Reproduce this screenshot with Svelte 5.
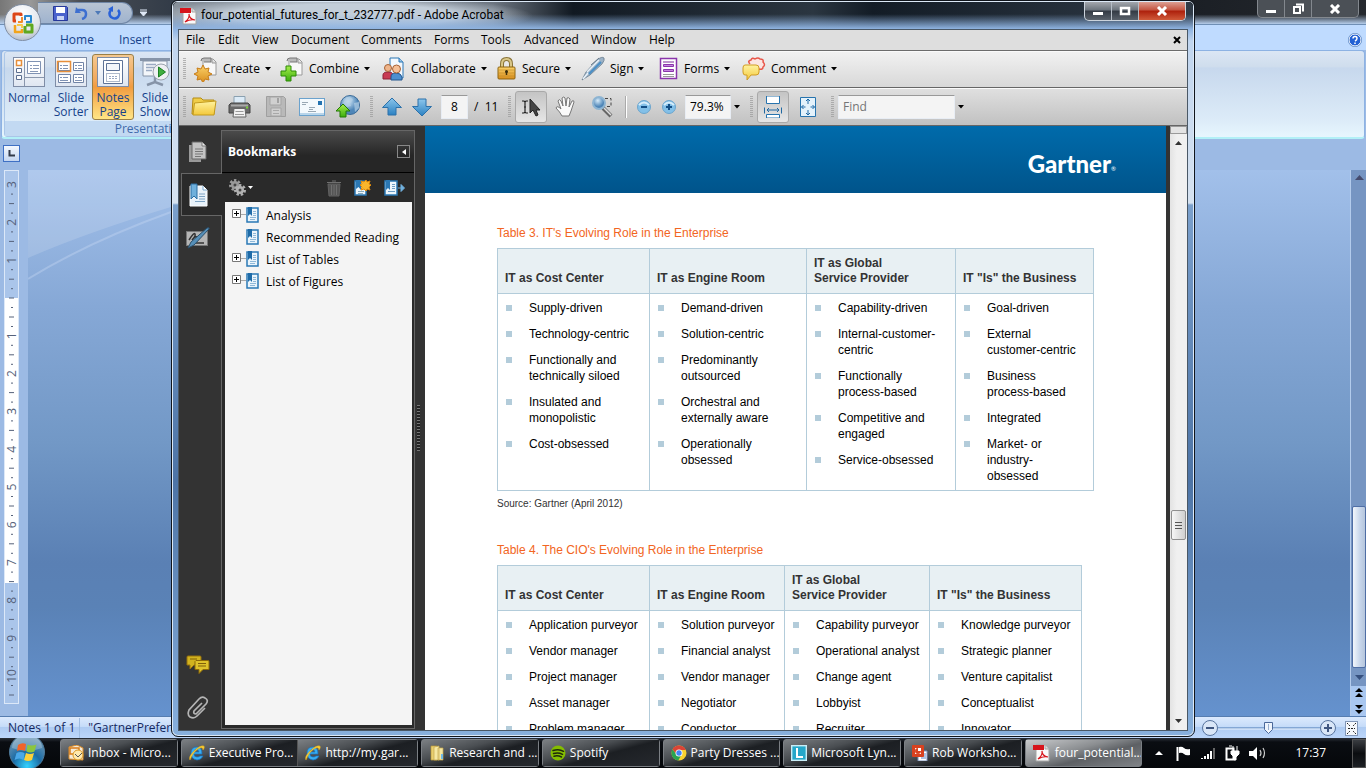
<script>
  const menus = [
    ['File', 32], ['Edit', 34], ['View', 39], ['Document', 70], ['Comments', 73],
    ['Forms', 47], ['Tools', 43], ['Advanced', 67], ['Window', 58], ['Help', 40]
  ];
  const tasks = ['Create', 'Combine', 'Collaborate', 'Secure', 'Sign', 'Forms', 'Comment'];
  const bookmarks = [
    ['Analysis', true], ['Recommended Reading', false], ['List of Tables', true], ['List of Figures', true]
  ];
  const heads = ['IT as Cost Center', 'IT as Engine Room', 'IT as Global\nService Provider', 'IT "Is" the Business'];
  const tables = [
    {
      id: 'roles-it',
      title: "Table 3. IT's Evolving Role in the Enterprise",
      cols: [
        ['Supply-driven', 'Technology-centric', 'Functionally and\ntechnically siloed', 'Insulated and\nmonopolistic', 'Cost-obsessed'],
        ['Demand-driven', 'Solution-centric', 'Predominantly\noutsourced', 'Orchestral and\nexternally aware', 'Operationally\nobsessed'],
        ['Capability-driven', 'Internal-customer-\ncentric', 'Functionally\nprocess-based', 'Competitive and\nengaged', 'Service-obsessed'],
        ['Goal-driven', 'External\ncustomer-centric', 'Business\nprocess-based', 'Integrated', 'Market- or\nindustry-\nobsessed']
      ],
      source: 'Source: Gartner (April 2012)'
    },
    {
      id: 'roles-cio',
      title: "Table 4. The CIO's Evolving Role in the Enterprise",
      cols: [
        ['Application purveyor', 'Vendor manager', 'Project manager', 'Asset manager', 'Problem manager'],
        ['Solution purveyor', 'Financial analyst', 'Vendor manager', 'Negotiator', 'Conductor'],
        ['Capability purveyor', 'Operational analyst', 'Change agent', 'Lobbyist', 'Recruiter'],
        ['Knowledge purveyor', 'Strategic planner', 'Venture capitalist', 'Conceptualist', 'Innovator']
      ],
      source: ''
    }
  ];
  const views = [
    ['normal', 'Normal'], ['sorter', 'Slide\nSorter'], ['notes', 'Notes\nPage'], ['show', 'Slide\nShow']
  ];
  const taskbar = [
    [['outlook', 'Inbox - Micro...']],
    [['ie', 'Executive Pro...'], ['ie', 'http://my.gar...']],
    [['explorer', 'Research and ...']],
    [['spotify', 'Spotify']],
    [['chrome', 'Party Dresses ...']],
    [['lync', 'Microsoft Lyn...']],
    [['ppt', 'Rob Worksho...']],
    [['pdf', 'four_potential...']]
  ];
  const unit = 37.8;
  const rulerMarks = Array.from({ length: 14 }, (_, i) => ({ n: Math.abs(i - 3), y: 128 + (i - 3) * unit }));
  let page = $state('8');
  let zoom = $state('79.3%');
  let find = $state('');
</script>

{#snippet icon(name)}
  {#if name === 'Create'}
    <svg width="24" height="26" viewBox="0 0 24 26"><use href="#sheet" /><path d="M9 9l2 4 4-1-1 4 4 2-4 2 1 4-4-1-2 4-2-4-4 1 1-4-4-2 4-2-1-4 4 1z" fill="url(#gold)" stroke="#c77c18" /></svg>
  {:else if name === 'Combine'}
    <svg width="24" height="26" viewBox="0 0 24 26"><use href="#sheet" /><path d="M6 10h5v5h5v5h-5v5H6v-5H1v-5h5z" fill="url(#green)" stroke="#2c8a07" /></svg>
  {:else if name === 'Collaborate'}
    <svg width="24" height="26" viewBox="0 0 24 26"><path d="M8 2h9l4 4v16H8z" fill="#f3f8fd" stroke="#2b77b5" /><path d="M17 2v4h4" fill="#9cc5e6" stroke="#2b77b5" /><path d="M1 23v-4q0-3 5-3t5 3v4z" fill="#c83b53" stroke="#8c2034" /><circle cx="6" cy="12" r="3.500" fill="#efb58b" stroke="#a86235" /><path d="M9 24v-3q0-4 5-4t6 4v3z" fill="#4d8fd0" stroke="#24568d" /><circle cx="14.500" cy="13" r="4" fill="#f5bf96" stroke="#a86235" /></svg>
  {:else if name === 'Secure'}
    <svg width="20" height="26" viewBox="0 0 20 26"><path d="M5 13V8q0-5 4.500-5T14 8v5" fill="none" stroke="#8a7438" stroke-width="4" /><path d="M5 13V8q0-5 4.500-5T14 8v5" fill="none" stroke="#d9c788" stroke-width="2" /><rect x="1" y="11" width="17" height="12" rx="1" fill="url(#gold)" stroke="#8d6410" /><path d="M2 14h15M2 17h15M2 20h15" stroke="#bd8b28" opacity=".6" /><circle cx="9.500" cy="15.500" r="1.500" fill="#3b2c0b" /><path d="M9.500 15v4" stroke="#3b2c0b" stroke-width="1.500" /></svg>
  {:else if name === 'Sign'}
    <svg width="24" height="26" viewBox="0 0 24 26"><path d="M1 24l4-8L16 4q5-4 7-2 1 2-2 6L9 19z" fill="#9db3c7" stroke="#6a7c8d" stroke-width=".8" /><path d="M6 16L18 4M2 23l5-6" stroke="#e9f2fa" stroke-width="1.500" /><path d="M8 18L20 6" stroke="#4a8fc6" stroke-width="2" /><path d="M10 9L18 2" stroke="#667a8c" fill="none" /></svg>
  {:else if name === 'Forms'}
    <svg width="20" height="26" viewBox="0 0 20 26"><path d="M1.500 2.500h16v20h-16z" fill="#fff" stroke="#8a35ab" stroke-width="1.500" /><path d="M4 6h11" stroke="#7c2b9b" /><path d="M4.500 8.500h10v2h-10zM4.500 13.500h10v2h-10z" fill="#c583df" stroke="#8a35ab" /><path d="M4 18.500h11M4 20.500h11" stroke="#999" /></svg>
  {:else if name === 'Comment'}
    <svg width="24" height="26" viewBox="0 0 24 26"><path d="M8 8q-3-3 1-4 1-3 4-1 3-2 5 0 4 0 3 3 3 3 0 5 0 3-4 2l-2 3v-3" fill="#fbe5e2" stroke="#e8564a" stroke-width="1.500" /><path d="M3 9h11q3 0 3 3v4q0 3-3 3H9l-4 5v-5H3q-2 0-2-3v-4q0-3 2-3z" fill="url(#yellow)" stroke="#d19c22" /></svg>
  {:else if name === 'folder'}
    <svg width="28" height="24" viewBox="0 0 28 24"><path d="M2 19L3 3h8l2 2h11v14z" fill="#f0cd48" stroke="#b58c12" /><path d="M3 20L4.500 8 26 6l-2 14z" fill="url(#yellow)" stroke="#c39a1c" /></svg>
  {:else if name === 'print'}
    <svg width="24" height="24" viewBox="0 0 24 24"><path d="M6 1.500h11v8H6z" fill="#dcebf7" stroke="#8aa0b0" /><path d="M3 8h17l2 2v8H1v-8z" fill="#6a6a6a" stroke="#444" /><path d="M3 10.500h17" stroke="#a9a9a9" stroke-width="2" /><path d="M6 13.500h11l1 8.500H5z" fill="#f2f2f2" stroke="#666" /><path d="M7.500 16.500h8M7 19.500h9" stroke="#999" /><path d="M18 12.500h2" stroke="#7ad03a" stroke-width="2" /></svg>
  {:else if name === 'save'}
    <svg width="22" height="24" viewBox="0 0 22 24"><path d="M1.500 1.500h17l2 2v18h-19z" fill="#b9b9b9" stroke="#9f9f9f" /><path d="M5 2h11v8H5zM6 13h10v8H6z" fill="#d0d0d0" stroke="#a5a5a5" /><path d="M13 3v5" stroke="#a2a2a2" stroke-width="2" /><path d="M8 15.500h6M8 18.500h6" stroke="#a8a8a8" /></svg>
  {:else if name === 'mail'}
    <svg width="26" height="20" viewBox="0 0 26 20"><rect x=".5" y="1.500" width="25" height="17" fill="#f4f9fd" stroke="#6ba2cd" /><path d="M1 17h24" stroke="#b9d5ea" stroke-width="2" /><path d="M19 4h4v4h-4z" fill="#2372b0" /><path d="M3 5.500h6M3 7.500h4M10 10.500h6M10 12.500h4M9 14.500h8" stroke="#9aa8b4" /></svg>
  {:else if name === 'globe'}
    <svg width="26" height="24" viewBox="0 0 26 24"><circle cx="15" cy="10" r="9.500" fill="url(#ball)" stroke="#3b6c99" /><path d="M12 2q5 0 6 3l-3 3 1 3-4 1-4-4zM19 8l5-1v6l-4 4z" fill="#b5d0e6" opacity=".7" /><path d="M8 9l7 7h-4v6H5v-6H1z" fill="url(#green)" stroke="#237b05" /></svg>
  {:else if name === 'up'}
    <svg width="22" height="22" viewBox="0 0 22 22"><path d="M11 2l9.500 9.500H15V19H7v-7.500H1.500z" fill="url(#blue)" stroke="#2c71aa" /></svg>
  {:else if name === 'down'}
    <svg width="22" height="22" viewBox="0 0 22 22"><path d="M11 20L1.500 10.500H7V3h8v7.500h5.500z" fill="url(#blue)" stroke="#2c71aa" /></svg>
  {:else if name === 'select'}
    <svg width="20" height="20" viewBox="0 0 20 20"><path d="M1 4h2l1 1 1-1h2M4 5v10M1 16h2l1-1 1 1h2M3 10h2" fill="none" stroke="#222" stroke-width="1.200" /><path d="M9 2v14l3-3 3 6 2-1-2-5h4z" fill="#444" stroke="#222" /></svg>
  {:else if name === 'hand'}
    <svg width="22" height="22" viewBox="0 0 22 22"><path d="M7 20q-2-4-6-8 1-3 5 1L3 5q1-3 3 0l2 5-1-8q2-2 3 0l1 8 1-8q2-1 3 1l-1 8 3-6q2-1 2 1l-3 9-2 5z" fill="#fafafa" stroke="#777" /></svg>
  {:else if name === 'loupe'}
    <svg width="24" height="24" viewBox="0 0 24 24"><path d="M9 3.500h11v8h-8" fill="none" stroke="#444" stroke-dasharray="3 2" /><path d="M12 13l8 8" stroke="#666" stroke-width="4" /><path d="M13 13l7 7" stroke="#ddd" stroke-width="1.500" /><circle cx="8" cy="8" r="6" fill="url(#ball)" stroke="#8db4d2" stroke-width="2" /></svg>
  {:else if name === 'minus' || name === 'plus'}
    <svg width="16" height="16" viewBox="0 0 16 16"><circle cx="8" cy="8" r="6.500" fill="#83c0e8" stroke="#6ba5cd" /><path d="M3 6q5-5 10 0" stroke="#d5ecfa" stroke-width="2" fill="none" /><path d={name === 'minus' ? 'M5 8h6' : 'M5 8h6M8 5v6'} stroke="#134f86" stroke-width="2" /></svg>
  {:else if name === 'fitwidth'}
    <svg width="18" height="22" viewBox="0 0 18 22"><path d="M2.500 0v7.500h13V0z" fill="#fff" stroke="#2874ae" /><path d="M2.500 22v-3.500h13V22z" fill="#fff" stroke="#2874ae" /><path d="M.5 11.500v6M17.500 11.500v6M3 14h12M5 12l-2 2 2 2M13 12l2 2-2 2" stroke="#2169a2" fill="none" /></svg>
  {:else if name === 'fitpage'}
    <svg width="18" height="22" viewBox="0 0 18 22"><path d="M1.500 1.500h15v19h-15z" fill="#e4f2fb" stroke="#2874ae" /><path d="M9 3v5M7 5l2-2 2 2M9 19v-5M7 17l2 2 2-2M2.500 11h4M4.500 9l-2 2 2 2M15.500 11h-4M13.500 9l2 2-2 2" fill="none" stroke="#1e69a6" /></svg>
  {:else if name === 'pages'}
    <svg width="20" height="22" viewBox="0 0 20 22"><path d="M1 4h12v17H1z" fill="#9a9a9a" /><path d="M4 1h10l4 4v13H4z" fill="#c4c4c4" stroke="#666" /><path d="M14 1v4h4" fill="#eee" stroke="#777" /><path d="M7 8h8M7 10.500h8M7 13h8M7 15.500h6" stroke="#777" /></svg>
  {:else if name === 'marks'}
    <svg width="20" height="24" viewBox="0 0 20 24"><path d="M1 3h13l4 4v16H1z" fill="#e9f2fa" stroke="#fff" /><path d="M14 3v4h4" fill="#fff" stroke="#7aa9cf" /><path d="M10 11h6M10 13.500h6M10 16h6M6 18.500h10" stroke="#7ea4c4" /><path d="M2 1h6v15l-3-3-3 3z" fill="#6fb0dc" stroke="#2c6fa3" /></svg>
  {:else if name === 'signature'}
    <svg width="24" height="22" viewBox="0 0 24 22"><rect x=".5" y="4.500" width="21" height="14" fill="#b5b5b5" stroke="#777" /><path d="M3 13q5-8 6-6t-3 6q3-4 5-3t3 1M5 16h13" fill="none" stroke="#333" stroke-width="1.500" /><path d="M2 21l3-6L21 1q3-1 2 1L8 18z" fill="#568fb8" stroke="#2b4f6b" /></svg>
  {:else if name === 'chat'}
    <svg width="24" height="20" viewBox="0 0 24 20"><path d="M2 1h12q1 0 1 1v8H8l-4 4v-4H1V2q0-1 1-1z" fill="#d2b31f" stroke="#98730c" /><path d="M10 5.500h12q1 0 1 1v8h-6l-4 4v-4H9v-8z" fill="#dfc22b" stroke="#8e6a08" /><path d="M12 8.500h8M12 11h8M4 4h7" stroke="#80600a" /></svg>
  {:else if name === 'clip'}
    <svg width="22" height="24" viewBox="0 0 22 24"><path d="M15 7L7 15q-1 3 2 3L19 8q3-4-1-6-3-2-6 1L2 14q-2 5 1 7 4 2 7-1l8-8" fill="none" stroke="#b5b5b5" stroke-width="1.700" /></svg>
  {:else if name === 'gear'}
    <svg width="20" height="18" viewBox="0 0 20 18"><circle cx="7" cy="6" r="4" fill="#999" stroke="#999" stroke-width="4" stroke-dasharray="2 1.500" /><circle cx="12" cy="11" r="4" fill="#b5b5b5" stroke="#b0b0b0" stroke-width="4" stroke-dasharray="2 1.500" /><circle cx="7" cy="6" r="1.500" fill="#444" /><circle cx="12" cy="11" r="1.500" fill="#444" /></svg>
  {:else if name === 'trash'}
    <svg width="16" height="18" viewBox="0 0 16 18"><path d="M2 5h12l-1 12H3z" fill="#555" stroke="#626262" /><path d="M1 3.500h14M6 2h4M5.500 6v10M8 6v10M10.500 6v10" stroke="#6f6f6f" /></svg>
  {:else if name === 'newmark'}
    <svg width="18" height="18" viewBox="0 0 18 18"><path d="M1 2h11v14H1z" fill="#eef6fc" stroke="#2a77b3" stroke-width="1.500" /><path d="M2 1h5v10L4.500 8 2 10z" fill="#2a77b3" /><path d="M4 12.500h6M4 14.500h5" stroke="#8ab" /><path d="M12 1l1 2 3-1-1 3 2 1-2 2 1 3-3-1-1 2-2-2-3 1 1-3-2-2 2-1-1-3 3 1z" fill="#f9b62c" stroke="#e18b0a" /></svg>
  {:else if name === 'expand'}
    <svg width="22" height="18" viewBox="0 0 22 18"><path d="M1 2h12v14H1z" fill="#eef6fc" stroke="#2a77b3" stroke-width="1.500" /><path d="M2 1h4v10L4 9l-2 2z" fill="#2a77b3" /><path d="M8 5.500h3M8 7.500h3M8 9.500h3M4 12.500h7" stroke="#6c9cc4" /><path d="M14 9h3M17 5.500L20.500 9 17 12.500z" fill="#71b1df" stroke="#71b1df" /></svg>
  {:else if name === 'bookmark'}
    <svg width="13" height="16" viewBox="0 0 13 16"><rect x="1" y="1" width="11" height="14" fill="#eaf4fb" stroke="#2a78b5" stroke-width="1.500" /><path d="M2 0h4v9L4 7 2 9z" fill="#1e6ba8" /><path d="M7 4.500h3M7 6.500h3M7 8.500h3M4 10.500h6M4 12.500h5" stroke="#8fb8d8" /></svg>
  {:else if name === 'pdf'}
    <svg width="18" height="18" viewBox="0 0 18 18"><path d="M3 1h9l4 4v12H3z" fill="#fafafa" stroke="#a5a5a5" /><path d="M12 1v4h4" fill="#ddd" stroke="#a5a5a5" /><path d="M0 1h11v5H0z" fill="#d6141b" /><path d="M5 15q5-4 4-8 0 5 6 6-5-1-10 2z" fill="none" stroke="#d6141b" stroke-width="1.200" /></svg>
  {:else if name === 'normal'}
    <svg width="32" height="30" viewBox="0 0 32 30"><use href="#tile" /><path d="M11.500 1v28M12 20.500h19" stroke="#8a97ad" /><path d="M3.500 3.500h5v5h-5z" fill="#fff" stroke="#e78f3a" stroke-width="1.500" /><path d="M3.500 11.500h5v4h-5zM3.500 18.500h5v4h-5z" fill="#fff" stroke="#5c6f90" /><path d="M14.500 4.500h13v12h-13z" fill="#fff" stroke="#7f92b3" /><path d="M17 8.500h2M17 11.500h2M20 8.500h6M20 11.500h6M17 14.500h8" stroke="#8899b8" /></svg>
  {:else if name === 'sorter'}
    <svg width="32" height="30" viewBox="0 0 32 30"><use href="#tile" /><path d="M3.500 4.500h12v9h-12zM18.500 5.500h10v8h-10zM3.500 17.500h12v8h-12zM18.500 17.500h10v8h-10z" fill="#fff" stroke="#7184a6" /><path d="M2.500 4.500h13v10h-13z" fill="none" stroke="#e78f3a" stroke-width="1.500" /><path d="M5 8.500h2M8 8.500h5M5 11.500h2M8 11.500h5M20 8.500h2M23 8.500h4M20 11.500h2M23 11.500h4M5 20.500h2M8 20.500h5M5 23.500h8M20 20.500h2M23 20.500h4M20 23.500h7" stroke="#8093b4" /></svg>
  {:else if name === 'notes'}
    <svg width="32" height="30" viewBox="0 0 32 30"><use href="#tile" /><path d="M6.500 3.500h19v23h-19z" fill="#fff" stroke="#5d7297" /><path d="M9.500 6.500h13v7h-13z" fill="#f3f6fb" stroke="#5d7297" /><path d="M9.500 16.500h13v8h-13z" fill="none" stroke="#5d7297" stroke-dasharray="1 1" /><path d="M12 19.500h8M12 21.500h8" stroke="#9aa9c4" stroke-dasharray="2 1" /></svg>
  {:else if name === 'show'}
    <svg width="32" height="30" viewBox="0 0 32 30"><path d="M1 1h30v3H1z" fill="#8694a8" /><path d="M4 4h24v15H4z" fill="#f3f6fa" stroke="#8694a8" /><path d="M7 7.500h10M7 10.500h8M7 13.500h6" stroke="#9aaac3" stroke-width="1.500" /><path d="M16 20v6M8 28l8-3 8 3" fill="none" stroke="#8694a8" stroke-width="2.500" /><circle cx="22" cy="15" r="8" fill="#eef0f3" stroke="#9aa2ae" /><path d="M19.500 10l7 5-7 5z" fill="#3fae3f" stroke="#1a7f22" /></svg>
  {:else if name === 'outlook'}
    <svg width="16" height="16" viewBox="0 0 16 16"><path d="M1 2l8-2 6 3v12L1 14z" fill="#f4ead8" stroke="#dd8c26" /><path d="M2 3h9v6H2z" fill="none" stroke="#d97c18" stroke-width="1.500" /><circle cx="10" cy="10" r="5" fill="#ffe9ad" stroke="#dc9b22" /><path d="M7 9l3 3 4-4" fill="none" stroke="#555" /></svg>
  {:else if name === 'ie'}
    <svg width="16" height="16" viewBox="0 0 16 16"><path d="M13 9H5q0 3 3 3 2 0 3-1h3q-2 4-6 4-6-1-6-7t6-6q5 0 5 7zM5 7h5q-1-3-3-3-2 1-2 3z" fill="#38aef2" stroke="#1672c4" stroke-width=".7" /><path d="M1 15Q-1 12 5 6t10-5q1 2-1 4 0-4-5-1T1 15z" fill="#f7cf3a" stroke="#dca414" stroke-width=".5" /></svg>
  {:else if name === 'explorer'}
    <svg width="16" height="16" viewBox="0 0 16 16"><path d="M2 1h6v14H2z" fill="#e9cf70" stroke="#bb9836" stroke-width=".7" /><path d="M5 2l5-1v14H5zM9 3h5v12H9z" fill="#f6e8a3" stroke="#c4a64c" stroke-width=".7" /><path d="M13 9v5" stroke="#6fb8e4" stroke-width="2" /></svg>
  {:else if name === 'spotify'}
    <svg width="16" height="16" viewBox="0 0 16 16"><circle cx="8" cy="8" r="7.500" fill="#84bd00" /><path d="M3 5.500q6-2 10.500.8M3.500 8.500q5-1.500 9 .8M4 11.200q4-1 7.500.8" fill="none" stroke="#1e2a0a" stroke-width="1.500" stroke-linecap="round" /></svg>
  {:else if name === 'chrome'}
    <svg width="16" height="16" viewBox="0 0 16 16"><circle cx="8" cy="8" r="7.500" fill="#f8d12f" /><path d="M1.500 4.200A7.500 7.500 0 0 1 14.800 5H8a3 3 0 0 0-3 4z" fill="#db4437" /><path d="M1.500 4.200A7.500 7.500 0 0 0 7.300 15.500L10.300 10a3 3 0 0 1-5-.8z" fill="#29a352" /><circle cx="8" cy="8" r="3.500" fill="#fff" /><circle cx="8" cy="8" r="2.700" fill="#4285f4" /></svg>
  {:else if name === 'lync'}
    <svg width="16" height="16" viewBox="0 0 16 16"><rect x=".7" y=".7" width="14.600" height="14.600" fill="#25a7c9" stroke="#c9eef7" stroke-width="1.400" /><path d="M6 3v9h6" fill="none" stroke="#fff" stroke-width="2" /></svg>
  {:else if name === 'ppt'}
    <svg width="16" height="16" viewBox="0 0 16 16"><path d="M6 6h9v10H6z" fill="#fff" stroke="#7b93bd" /><path d="M9 9h5M9 11h5M9 13h5" stroke="#5f86c4" /><rect x="0" y="0" width="12" height="12" rx="1" fill="#d9421f" /><path d="M3 3h6v6H3z" fill="#fff" /><path d="M6 3v3h3A3 3 0 1 1 6 3z" fill="#d9421f" /></svg>
  {/if}
{/snippet}

{#snippet caret()}<svg class="caret" width="7" height="4" viewBox="0 0 7 4"><path d="M0 0h6L3 3.500z" fill="#000" /></svg>{/snippet}

<svg class="defs" width="0" height="0" aria-hidden="true">
  <defs>
    <linearGradient id="gold" x2="0" y2="1"><stop offset="0" stop-color="#fbd26a" /><stop offset="1" stop-color="#d98d1c" /></linearGradient>
    <linearGradient id="yellow" x2="0" y2="1"><stop offset="0" stop-color="#fff3a0" /><stop offset="1" stop-color="#f3c83a" /></linearGradient>
    <linearGradient id="green" x2="0" y2="1"><stop offset="0" stop-color="#a6ee4d" /><stop offset="1" stop-color="#3cae0c" /></linearGradient>
    <linearGradient id="blue" x2="0" y2="1"><stop offset="0" stop-color="#8cc6ec" /><stop offset="1" stop-color="#2b81c2" /></linearGradient>
    <radialGradient id="ball" cx=".4" cy=".3"><stop offset="0" stop-color="#d6ebf9" /><stop offset="1" stop-color="#4f86b8" /></radialGradient>
    <radialGradient id="orb" cx=".5" cy=".9" r=".9"><stop offset="0" stop-color="#35d2ff" /><stop offset=".45" stop-color="#1b6ba4" /><stop offset="1" stop-color="#7d9fb8" /></radialGradient>
    <linearGradient id="tileface" x2="0" y2="1"><stop offset="0" stop-color="#fff" /><stop offset="1" stop-color="#dfe6f1" /></linearGradient>
    <g id="sheet"><path d="M9 3h10l3 3v13H9z" fill="#f8f8f8" stroke="#9a9a9a" /><path d="M7 5q0-3 3-3h7v4h-7" fill="#bbb" stroke="#777" /><path d="M18 3v4h4" fill="#ddd" stroke="#999" /></g>
    <g id="tile"><rect x=".5" y=".5" width="31" height="29" fill="url(#tileface)" stroke="#7f8da6" /></g>
  </defs>
</svg>

<div class="desktop">
  <section class="ppt">
    <header class="ppt-title">
      <div class="quick">
        <button aria-label="Save"><svg width="15" height="15" viewBox="0 0 15 15"><path d="M.5.500h13l1 1v13H.5z" fill="#4a62cc" stroke="#27389a" /><path d="M3 1h9v6H3z" fill="#fff" /><path d="M4 10h7v4H4z" fill="#c9d4f4" /></svg></button>
        <button aria-label="Undo"><svg width="13" height="14" viewBox="0 0 13 14"><path d="M2 4h5q4 0 4 4t-4 5" fill="none" stroke="#3d6fd0" stroke-width="2.500" /><path d="M0 7l1-6 5 6z" fill="#3d6fd0" /></svg></button>
        <svg width="6" height="4" viewBox="0 0 6 4"><path d="M0 0h6L3 4z" fill="#4d79b8" /></svg>
        <button aria-label="Repeat"><svg width="13" height="14" viewBox="0 0 13 14"><path d="M3 4q-3 4 0 7 4 3 7 0 3-4 0-7" fill="none" stroke="#2a62d8" stroke-width="2.500" /><path d="M5 0v6L0 3z" fill="#2a62d8" /></svg></button>
      </div>
      <button class="more" aria-label="Customize"><svg width="7" height="7" viewBox="0 0 7 7"><path d="M0 1h7M0 3h7L3.500 7z" stroke="#dfe8f6" fill="#dfe8f6" /></svg></button>
      <div class="caption-buttons dim">
        <button aria-label="Minimize"><svg width="12" height="10"><rect x="1" y="6" width="10" height="3" fill="#fff" /></svg></button>
        <button aria-label="Restore"><svg width="12" height="11"><path d="M4 1.500h7v7M2 4h6v6H2z" fill="none" stroke="#fff" stroke-width="2" /></svg></button>
        <button class="wide" aria-label="Close"><svg width="12" height="10" viewBox="0 0 12 10"><path d="M2 1l8 8M10 1L2 9" stroke="#fff" stroke-width="3" /></svg></button>
      </div>
    </header>
    <nav class="tabs"><a href="#home">Home</a><a href="#insert">Insert</a>
      <button class="help" aria-label="Help"><svg width="14" height="14" viewBox="0 0 14 14"><circle cx="7" cy="7" r="6" fill="#2462d4" stroke="#fff" /><circle cx="7" cy="7" r="6.700" fill="none" stroke="#3d6db0" stroke-width=".6" /><path d="M5 5.500q0-2 2-2t2 1.700T7 8M7 9.500v1.500" fill="none" stroke="#fff" stroke-width="1.500" /></svg></button>
    </nav>
    <div class="ribbon">
      <div class="group">
        <div class="views">
          {#each views as [id, label]}
            <button class:on={id === 'notes'}>{@render icon(id)}<span>{label}</span></button>
          {/each}
        </div>
        <p>Presentation Views</p>
      </div>
    </div>
    <div class="work">
      <div class="corner"><button aria-label="Tab stop"><svg width="7" height="7"><path d="M1.500 0v5.500H7" fill="none" stroke="#333b4a" stroke-width="2" /></svg></button></div>
      <div class="stage">
        <svg class="ruler" width="15" height="534" viewBox="0 0 15 534">
          <rect x=".5" y=".5" width="14" height="533" fill="#aac5ea" stroke="#dce8f8" />
          <rect x="1" y="128" width="13" height="285" fill="#fff" />
          {#each rulerMarks as m}
            {#if m.n}<text transform="translate(12 {m.y}) rotate(-90)" text-anchor="middle">{m.n}</text>{:else}<path d="M5 {m.y}h5" stroke="#56627a" />{/if}
            <path d="M7 {m.y + 9.5}h2M5 {m.y + 19}h5M7 {m.y + 28.5}h2" stroke="#56627a" />
          {/each}
        </svg>
        <div class="slide">
          <svg width="100%" height="280" viewBox="0 0 1322 280" preserveAspectRatio="none"><path d="M0 0h700L143 37Q60 62 0 88z" fill="#fff" opacity=".15" /><path d="M0 109Q60 72 143 42l300-42" fill="none" stroke="#c5d8f2" stroke-width="2" opacity=".4" /></svg>
        </div>
        <div class="vbar">
          <svg width="16" height="16"><path d="M4 10h9L8.500 5z" fill="#454b6d" /></svg>
          <div class="vtrack"><i></i></div>
          <svg width="16" height="18"><path d="M4 7h9l-4.500 5z" fill="#36507e" /></svg>
          <div class="jump">
            <svg width="15" height="30" viewBox="0 0 15 30"><path d="M4 6h8L8 2zM4 11h8L8 7zM4 19h8l-4 4zM4 24h8l-4 4z" fill="#000" /></svg>
          </div>
        </div>
      </div>
    </div>
    <footer class="status">
      <span>Notes 1 of 1</span><span>"GartnerPreferred"</span>
      <div class="zoomer">
        <svg width="158" height="20" viewBox="0 0 158 20"><path d="M18 10h102" stroke="#5a82b8" /><path d="M18 11h102" stroke="#e9f2fd" /><circle cx="10" cy="10" r="7.500" fill="#d9e6f7" stroke="#58749e" /><circle cx="128" cy="10" r="7.500" fill="#d9e6f7" stroke="#58749e" /><path d="M6 10h8M124 10h8M128 6v8" stroke="#3f5680" stroke-width="2" /><path d="M64.500 4.500h8v7l-4 4-4-4z" fill="#eef4fc" stroke="#4a689a" /><path d="M68.500 6v6" stroke="#9ab0d0" /><rect x="145.500" y="3.500" width="12" height="14" fill="#f5f8fc" stroke="#8297b8" /><path d="M147 5l3 3M156 5l-3 3M147 16l3-3M156 16l-3-3M148 10.500h7" stroke="#222" stroke-dasharray="2 1" /></svg>
      </div>
    </footer>
    <button class="office" aria-label="Office Button">
      <svg width="24" height="24" viewBox="0 0 24 24" fill="none" stroke-linejoin="round"><path d="M5 10H3V3h7v2" stroke="#dd4618" stroke-width="3" /><path d="M7 11h4V6" stroke="#ef8a2c" stroke-width="2" /><path d="M14 9V5h6v6h-5" stroke="#2a88cf" stroke-width="2" /><path d="M4 14v7h7v-3" stroke="#f2a41b" stroke-width="2.500" /><path d="M6 14h5v3" stroke="#f7c948" stroke-width="2" /><path d="M15 14h6v7h-7v-6" stroke="#5fa81f" stroke-width="3" /></svg>
    </button>
  </section>

  <main class="acrobat">
    <header class="acro-title">
      {@render icon('pdf')}<h1>four_potential_futures_for_t_232777.pdf - Adobe Acrobat</h1>
      <div class="caption-buttons">
        <button aria-label="Minimize"><svg width="12" height="10"><rect x="1" y="6" width="10" height="3" fill="#fff" /></svg></button>
        <button aria-label="Maximize"><svg width="12" height="10"><path d="M2 2h8v6H2z" fill="none" stroke="#fff" stroke-width="2.500" /></svg></button>
        <button class="wide close" aria-label="Close"><svg width="12" height="10" viewBox="0 0 12 10"><path d="M2 1l8 8M10 1L2 9" stroke="#fff" stroke-width="3" /></svg></button>
      </div>
    </header>
    <div class="client">
      <nav class="menubar">
        {#each menus as [label, w]}<button style="width: {w}px">{label}</button>{/each}
        <button class="x" aria-label="Close document"><svg width="8" height="8"><path d="M1 1l6 6M7 1L1 7" stroke="#000" stroke-width="2" /></svg></button>
      </nav>
      <div class="bar tasks">
        <i class="grip"></i>
        {#each tasks as t}
          <button>{@render icon(t)}<span>{t}</span>{@render caret()}</button>
        {/each}
      </div>
      <div class="bar tools">
        <i class="grip"></i>
        <button class="w36" aria-label="Open">{@render icon('folder')}</button>
        <button class="w36" aria-label="Print">{@render icon('print')}</button>
        <button class="w36" aria-label="Save" disabled>{@render icon('save')}</button>
        <button class="w36" aria-label="Email">{@render icon('mail')}</button>
        <button class="w36" aria-label="Upload">{@render icon('globe')}</button>
        <i class="grip"></i>
        <button class="w30" aria-label="Previous page">{@render icon('up')}</button>
        <button class="w30" aria-label="Next page">{@render icon('down')}</button>
        <label class="pager"><input aria-label="Page" bind:value={page} /><span>/ &nbsp;11</span></label>
        <i class="grip"></i>
        <button class="w32 on" aria-label="Select">{@render icon('select')}</button>
        <button class="w38" aria-label="Hand">{@render icon('hand')}</button>
        <button class="w36" aria-label="Marquee zoom">{@render icon('loupe')}</button>
        <i class="rule"></i>
        <button class="w25" aria-label="Zoom out">{@render icon('minus')}</button>
        <button class="w25" aria-label="Zoom in">{@render icon('plus')}</button>
        <label class="zoom"><input aria-label="Zoom level" bind:value={zoom} />{@render caret()}</label>
        <i class="grip"></i>
        <button class="w32 on" aria-label="Fit width">{@render icon('fitwidth')}</button>
        <button class="w38" aria-label="Fit page">{@render icon('fitpage')}</button>
        <i class="grip"></i>
        <label class="find"><input aria-label="Find" placeholder="Find" bind:value={find} />{@render caret()}</label>
      </div>
      <div class="body">
        <aside class="strip">
          <button aria-label="Pages">{@render icon('pages')}</button>
          <button class="on" aria-label="Bookmarks">{@render icon('marks')}</button>
          <button aria-label="Signatures">{@render icon('signature')}</button>
          <button class="push" aria-label="Comments">{@render icon('chat')}</button>
          <button aria-label="Attachments">{@render icon('clip')}</button>
        </aside>
        <aside class="panel">
          <h2>Bookmarks<button aria-label="Collapse"><svg width="4" height="6"><path d="M4 0v6L0 3z" fill="#fff" /></svg></button></h2>
          <div class="panel-tools">
            <button aria-label="Options">{@render icon('gear')}<svg width="6" height="3"><path d="M0 0h5L2.500 3z" fill="#fff" /></svg></button>
            <span></span>
            <button aria-label="Delete">{@render icon('trash')}</button>
            <button aria-label="New bookmark">{@render icon('newmark')}</button>
            <button aria-label="Expand current">{@render icon('expand')}</button>
          </div>
          <ul>
            {#each bookmarks as [label, open]}
              <li><span class="twig">{#if open}<svg width="14" height="9"><path d="M.5.500h8v8h-8z" fill="#fff" stroke="#777" /><path d="M2 4.500h5M4.500 2v5" stroke="#000" /><path d="M9 5.500h5" stroke="#aaa" /></svg>{/if}</span>{@render icon('bookmark')}<a href="#{label}">{label}</a></li>
            {/each}
          </ul>
        </aside>
        <div class="splitter"><i></i></div>
        <article class="page">
          <div class="banner"><strong>Gartner</strong><sup>®</sup></div>
          {#each tables as t}
            <section class={t.id}>
              <h3 id={t.id}>{t.title}</h3>
              <table aria-labelledby={t.id}>
                <colgroup><col /><col /><col /><col /></colgroup>
                <thead><tr>{#each heads as h}<th scope="col">{h}</th>{/each}</tr></thead>
                <tbody><tr>{#each t.cols as items}<td><ul>{#each items as it}<li>{it}</li>{/each}</ul></td>{/each}</tr></tbody>
              </table>
              {#if t.source}<p>{t.source}</p>{/if}
            </section>
          {/each}
        </article>
        <div class="scroll">
          <i class="split"></i>
          <svg width="16" height="18"><path d="M5 11h7L8.500 7z" fill="#333" /></svg>
          <div class="track"><i></i></div>
          <svg width="16" height="18"><path d="M5 7h7l-3.500 4z" fill="#333" /></svg>
        </div>
      </div>
    </div>
  </main>

  <footer class="taskbar">
    <button class="start" aria-label="Start"><svg width="38" height="36" viewBox="0 0 38 36"><circle cx="19" cy="19" r="17.500" fill="url(#orb)" stroke="#4d7898" /><path d="M4 15a15 13 0 0 1 30 0q-15 6-30 0z" fill="#fff" opacity=".25" /><path d="M10 12q4-3 8-1l-1 7q-4-2-8 0z" fill="#f0642a" /><path d="M19.500 11.500q4 2 9 0l-2 7q-4 2-8 0z" fill="#8cc63f" /><path d="M8.500 20q4-2 8 0l-1 7q-4-3-9 0z" fill="#4aa8e8" /><path d="M18 20q4 2 8 0l-2 7q-4 2-8 0z" fill="#fdd13a" /></svg></button>
    {#each taskbar as group, gi}
      <div class="tb-group">
        {#each group as [ic, label]}
          <button class:active={gi === taskbar.length - 1}>{@render icon(ic)}<span>{label}</span></button>
        {/each}
      </div>
    {/each}
    <div class="tray">
      <svg width="150" height="20" viewBox="0 0 150 20"><path d="M10 12h8l-4-4z" fill="#fff" /><path d="M32.500 4v14" stroke="#fff" stroke-width="2" /><path d="M34 4q3-1 5 1t6 1v6q-4 1-6-1t-5-1z" fill="#fff" /><path d="M57 15v1M60 13v3M63 11v5M66 8v8" stroke="#fff" stroke-width="2" /><path d="M69 5v11" stroke="#666" stroke-width="2" /><path d="M81.500 5.500h7v11h-7z" fill="none" stroke="#fff" stroke-width="2" /><path d="M84 3h3M88 3v5M92 3v5M86 8h8v3l-3 3v3h-2v-3l-3-3z" fill="#fff" stroke="#fff" /><path d="M104 8h4l4-4v13l-4-4h-4z" fill="#fff" /><path d="M115 7q2 3 0 6M118 5q3 5 0 10" fill="none" stroke="#ccc" stroke-width="1.200" /></svg>
      <time>17:37</time>
      <button class="peek" aria-label="Show desktop"></button>
    </div>
  </footer>
</div>

<style>
  :global(body) { margin: 0; }
  .desktop { position: relative; display: flex; flex-direction: column; height: 100vh; min-height: 500px; overflow: hidden; font: 12px/16px "Open Sans", "Noto Sans", sans-serif; color: #000; background: #9cbae4; }
  .desktop * { box-sizing: border-box; }
  .defs { position: absolute; }
  svg { display: block; flex: none; }
  button { display: flex; align-items: center; padding: 0; border: 0; background: none; font: inherit; color: inherit; white-space: nowrap; }
  a { color: inherit; text-decoration: none; }
  h1, h2, h3, p, ul { margin: 0; padding: 0; font: inherit; list-style: none; }
  input { border: 1px solid #e8edf4; border-top-color: #999; background: #f4f4f4; font: inherit; color: #000; height: 24px; border-radius: 1px; min-width: 0; }

  /* presentation window */
  .ppt { position: relative; flex: 1; min-height: 0; display: flex; flex-direction: column; }
  .ppt-title { display: flex; align-items: flex-start; height: 25px; padding-left: 38px; background: linear-gradient(#0000 60%, #b5cdeb), linear-gradient(90deg, #777 0, #999 30px, #4a4e55 80px, #333c48 170px, #1b1f25 1190px, #25292e); border-bottom: 1px solid #6f8fb5; }
  .quick { display: flex; align-items: center; gap: 7px; height: 22px; margin-top: 2px; padding: 0 11px 0 15px; border: 1px solid #6f86a6; border-left: 0; border-radius: 0 11px 11px 0; background: linear-gradient(#b8c4d4, #9fb3ce); }
  .more { height: 24px; padding: 0 7px; }
  .caption-buttons { display: flex; margin-left: auto; border: 1px solid #cbd3dc; border-top: 0; border-radius: 0 0 5px 5px; background: linear-gradient(#a3a7ad, #6b737c 45%, #333a44 50%, #59616b); }
  .caption-buttons button { justify-content: center; width: 27px; height: 18px; border-right: 1px solid #b5bdc6; }
  .caption-buttons .wide { width: 46px; border-right: 0; }
  .caption-buttons .close { border-radius: 0 0 4px 0; background: linear-gradient(#dd9f92, #c4533f 45%, #ad200c 50%, #d05a3a); }
  .dim { margin-right: 7px; height: 18px; background: #4b5056; border-color: #83888e; }
  .dim button { height: 17px; border-color: #83888e; }
  .tabs { display: flex; align-items: center; gap: 25px; height: 25px; padding: 4px 4px 0 60px; background: #bfdbff; color: #15428b; }
  .help { margin-left: auto; }
  .ribbon { margin: 0 1px; height: 89px; border: 1px solid #8db2e3; border-bottom: 2px solid #b2f0f7; border-radius: 4px; background: linear-gradient(#dbe6f4, #cfdded 18%, #c7d8ed 20%, #dcebf8 80%, #e7f6fe); }
  .group { display: flex; flex-direction: column; justify-content: space-between; width: 328px; height: 86px; margin-left: 2px; border: 1px solid #aac6e8; border-radius: 3px; color: #15428b; }
  .group p { text-align: center; line-height: 15px; background: #c2d9f2; color: #3e6aaa; }
  .views { display: flex; padding: 2px 0 0 3px; }
  .views button { flex-direction: column; width: 42px; height: 66px; padding-top: 2px; border: 1px solid transparent; border-radius: 3px; line-height: 14px; white-space: pre; }
  .views svg { margin-bottom: 4px; }
  .views .on { border-color: #9a7f46; background: linear-gradient(#f5c990, #f2a759 40%, #f19c3f 50%, #ffe585); }
  .work { flex: 1; min-height: 0; display: flex; flex-direction: column; background: #9cbae4; }
  .corner { flex: none; height: 31px; padding: 6px 3px; }
  .corner button { justify-content: center; width: 17px; height: 17px; border: 1px solid #3f70c4; background: linear-gradient(#f4f8fe, #c5d6f0); }
  .stage { flex: 1; min-height: 0; display: flex; overflow: hidden; padding-left: 4px; gap: 9px; }
  .ruler text { font: 12px "Open Sans", sans-serif; fill: #56627a; }
  .slide { flex: 1; background: linear-gradient(#a2c0ea, #86a8d6 25%, #7298c6 50%, #5a80b4 72%, #5a82b6 80%, #6592ce); }
  .vbar { display: flex; flex-direction: column; align-items: center; width: 16px; margin-left: -9px; border-left: 1px solid #b3cbec; background: #7695c2; }
  .vtrack { flex: 1; display: flex; align-items: flex-end; padding-left: 1px; }
  .vtrack i { width: 14px; height: 162px; border: 1px solid #4f6ea5; border-radius: 2px; background: linear-gradient(90deg, #f2f6fb, #c6d5ea 60%, #b6c6dc); }
  .jump { background: #a9c7f0; }
  .status { display: flex; align-items: center; height: 22px; border-top: 1px solid #567db0; background: linear-gradient(#dceafd, #c6dcf9 45%, #aecbf2 50%, #bcd6fa); color: #15285f; }
  .status span { padding: 0 4px 0 8px; line-height: 20px; border-right: 1px solid #9ebce2; }
  .zoomer { margin-left: auto; padding-right: 8px; }
  .office { position: absolute; left: 4px; top: 4px; justify-content: center; width: 37px; height: 37px; border: 1px solid #7f8da3; border-radius: 50%; background: radial-gradient(circle at 50% 25%, #fff, #dfe3ea 60%, #9ba7b9); }

  /* document window */
  .acrobat { position: absolute; inset: 0 171px 31px 171px; display: flex; flex-direction: column; padding: 0 6px 5px; border: 1px solid #10151c; border-radius: 6px 6px 7px 7px; box-shadow: inset 0 0 0 1px #dce9f7; background: linear-gradient(#10151c 0, #1c2530 14px, #8fb4e2 28px, #c0d5ef 40px, #d6e2f0 202px, #7ba0cc 204px, #6a90bf 300px, #4d74a6 480px, #88b0dd 100%); }
  .acro-title { display: flex; align-items: flex-start; height: 27px; margin: 1px -5px 0; padding: 0 7px; border-radius: 5px 5px 0 0; background: linear-gradient(#0000 45%, #8fb4e2), radial-gradient(ellipse 190px 20px at 170px 14px, #c3ced9 60%, #c3ced900), linear-gradient(90deg, #87909a, #6d7681 320px, #111922 400px, #2b3641 640px, #131c26 700px, #303b47); }
  .acro-title > svg { margin: 5px 3px 0 0; }
  h1 { flex: 1; padding-top: 5px; white-space: nowrap; font-family: Roboto, sans-serif; }
  .client { flex: 1; min-height: 0; display: flex; flex-direction: column; border: 1px solid #4a5866; background: #dedede; }
  .menubar { display: flex; height: 21px; padding-left: 7px; border-bottom: 1px solid #6c6c6c; }
  .x { margin-left: auto; margin-right: 6px; }
  .bar { display: flex; align-items: center; border-bottom: 1px solid #666; box-shadow: inset 0 1px #fafafa; }
  .tasks { display: grid; grid-template-columns: 11px 86px 102px 115px 84px 78px 83px 95px; height: 37px; padding-left: 4px; background: linear-gradient(#f2f2f2, #d8d8d8); }
  .tasks span { padding: 0 5px; }
  .grip { flex: none; width: 3px; height: 22px; background: repeating-linear-gradient(#999 0 1px, #0000 1px 2px); opacity: .7; }
  .tools { height: 38px; padding-left: 4px; background: linear-gradient(#e0e0e0, #c1c1c1); }
  .tools button { flex: none; justify-content: center; height: 32px; }
  .tools .on { border: 1px solid #a9a9a9; border-radius: 3px; background: linear-gradient(#c4c4c4, #e6e6e6); }
  .tools .grip { margin: 0 4px; }
  .tools .grip:first-child { margin: 0; }
  .w25 { width: 25px; } .w30 { width: 30px; } .w32 { width: 32px; } .w36 { width: 36px; } .w38 { width: 38px; }
  .rule { width: 2px; height: 22px; margin: 0 4px; border-left: 1px solid #aaa; border-right: 1px solid #fff; }
  .pager { display: flex; align-items: center; gap: 6px; width: 67px; padding-left: 4px; }
  .pager input { width: 27px; text-align: center; padding: 0; }
  .pager span { white-space: nowrap; }
  .zoom { display: flex; align-items: center; gap: 3px; width: 65px; padding-left: 4px; }
  .zoom input { width: 46px; padding: 0 4px; }
  .find { display: flex; align-items: center; gap: 3px; }
  .find input { width: 117px; padding: 0 4px; }
  .find input::placeholder { color: #757575; opacity: 1; }

  .body { flex: 1; min-height: 0; display: flex; background: #333; }
  .strip { display: flex; flex-direction: column; width: 42px; padding: 4px 0 1px 2px; }
  .strip button { justify-content: center; width: 34px; height: 43px; }
  .strip .on { width: 41px; margin-right: -1px; padding-right: 6px; border: 1px solid #666; border-right: 0; background: #2a2a2a; position: relative; }
  .strip .push { margin-top: auto; }
  .panel { display: flex; flex-direction: column; width: 194px; margin: 4px 0 1px; border: 1px solid #666; background: #2a2a2a; }
  h2 { display: flex; align-items: center; justify-content: space-between; height: 42px; padding: 0 4px 0 6px; border-bottom: 1px solid #000; background: linear-gradient(#4b4b4b, #262626 60%); color: #fff; font-weight: 700; }
  h2 button { justify-content: center; width: 13px; height: 13px; border: 1px solid #888; }
  .panel-tools { display: flex; align-items: center; gap: 12px; height: 29px; padding: 0 8px 0 6px; }
  .panel-tools span { flex: 1; }
  .panel > ul { flex: 1; margin: 0 2px 3px 3px; padding: 2px 0; background: #f4f4f4; font-size: 12px; }
  .panel li { display: flex; align-items: center; height: 22px; padding-left: 7px; white-space: nowrap; }
  .twig { width: 14px; height: 12px; }
  .panel li a { padding: 1px 0 0 7px; }
  .splitter { display: flex; align-items: center; width: 10px; padding-left: 2px; }
  .splitter i { width: 3px; height: 46px; background: repeating-linear-gradient(#777 0 1px, #222 1px 3px); }
  .page { flex: 1; min-width: 0; overflow: hidden; margin-right: 4px; background: #fff; font: 12px/16px "Liberation Sans", Arial, sans-serif; }
  .banner { display: flex; justify-content: flex-end; align-items: center; height: 67px; padding: 8px 50px 0 0; background: linear-gradient(#006bab, #00548b); color: #fff; }
  .banner strong { font: 900 24px/30px Lato, sans-serif; }
  .banner sup { font: 6px/6px Lato, sans-serif; padding-top: 10px; }
  .page section { padding-left: 72px; }
  .page h3 { padding-top: 32px; color: #f26522; }
  .page table { table-layout: fixed; margin-top: 7px; border-collapse: collapse; white-space: pre; }
  .roles-it table { width: 597px; }
  .roles-cio table { width: 585px; }
  .page col:nth-child(1) { width: 152px; }
  .roles-it col:nth-child(2) { width: 157px; }
  .roles-it col:nth-child(3) { width: 149px; }
  .roles-cio col:nth-child(2) { width: 135px; }
  .roles-cio col:nth-child(3) { width: 145px; }
  th { padding: 7px; border: 1px solid #b3ccda; background: #e8f0f3; line-height: 15px; text-align: left; vertical-align: bottom; color: #333; }
  td { padding: 6px 7px; border: 1px solid #b3ccda; vertical-align: top; }
  td ul { display: flex; flex-direction: column; gap: 10px; }
  td li { display: grid; grid-template-columns: 24px 1fr; }
  td li::before { content: ""; width: 6px; height: 6px; margin: 5px 1px; background: #b3ccda; }
  .page p { margin-top: 6px; font-size: 10px; line-height: 13px; color: #333; }
  .scroll { display: flex; flex-direction: column; width: 17px; background: linear-gradient(90deg, #e3e3e3, #f0f0f0 40%); }
  .split { height: 8px; border: 1px solid #999; background: #e3e3e3; }
  .track { flex: 1; display: flex; flex-direction: column; padding: 358px 1px 0; }
  .track i { height: 30px; border: 1px solid #8f8f8f; border-radius: 2px; background: linear-gradient(#555, #555) center 11px / 7px 1px no-repeat, linear-gradient(#555, #555) center 14px / 7px 1px no-repeat, linear-gradient(#555, #555) center 17px / 7px 1px no-repeat, linear-gradient(90deg, #f6f6f6, #cfcfcf); }

  /* taskbar */
  .taskbar { display: flex; align-items: center; gap: 3px; height: 30px; background: linear-gradient(#2b3038, #0a0d12 4px, #05070a); color: #fff; }
  .start { flex: none; width: 57px; height: 36px; padding-left: 8px; margin-top: -4px; }
  .tb-group { display: flex; min-width: 0; border: 1px solid #7b7f84; border-radius: 3px; }
  .tb-group button { width: 116px; height: 26px; padding-left: 7px; gap: 4px; overflow: hidden; background: linear-gradient(165deg, #7b7f83, #4a4e52 35%, #1c1f23 55%, #26292e); }
  .tb-group button + button { width: 120px; border-left: 1px solid #555; }
  .tb-group .active { background: linear-gradient(165deg, #c9cbcd, #8b8e91 40%, #5d6064 60%, #808387); }
  .tray { display: flex; align-items: center; height: 30px; margin-left: auto; }
  .tray time { padding-right: 26px; }
  .peek { width: 14px; height: 29px; border: 1px solid #555; background: linear-gradient(#3a3d42, #0b0d10 50%, #1d2024); }
</style>
